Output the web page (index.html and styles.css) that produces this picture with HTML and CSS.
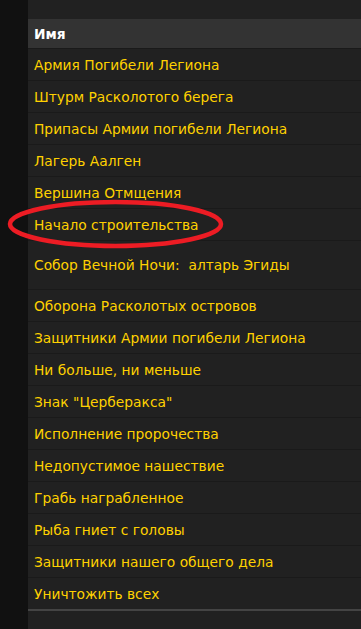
FILE: index.html
```html
<!DOCTYPE html>
<html lang="ru">
<head>
<meta charset="utf-8">
<link rel="stylesheet" href="styles.css">
</head>
<body>
<div class="page">
  <div class="side"></div>
  <div class="main">
    <div class="table">
      <div class="head">Имя</div>
      <div class="row">Армия Погибели Легиона</div>
      <div class="row">Штурм Расколотого берега</div>
      <div class="row">Припасы Армии погибели Легиона</div>
      <div class="row">Лагерь Аалген</div>
      <div class="row">Вершина Отмщения</div>
      <div class="row">Начало строительства</div>
      <div class="row tall">Собор Вечной Ночи:&nbsp; алтарь Эгиды</div>
      <div class="row">Оборона Расколотых островов</div>
      <div class="row">Защитники Армии погибели Легиона</div>
      <div class="row">Ни больше, ни меньше</div>
      <div class="row">Знак "Церберакса"</div>
      <div class="row">Исполнение пророчества</div>
      <div class="row">Недопустимое нашествие</div>
      <div class="row">Грабь награбленное</div>
      <div class="row">Рыба гниет с головы</div>
      <div class="row">Защитники нашего общего дела</div>
      <div class="row last">Уничтожить всех</div>
    </div>
  </div>
  <svg class="mark" width="361" height="629" viewBox="0 0 361 629">
    <ellipse cx="115.5" cy="224" rx="105.5" ry="22" fill="none" stroke="#ed1c24" stroke-width="4.5"/>
  </svg>
</div>
</body>
</html>
```
FILE: styles.css
```css
html, body {
  margin: 0;
  padding: 0;
  background: #111111;
}
.page {
  position: relative;
  display: flex;
  width: 361px;
  height: 629px;
  overflow: hidden;
  font-family: "DejaVu Sans", Verdana, sans-serif;
  font-size: 13.8px;
}
.side {
  width: 28px;
  flex: none;
  background: #111111;
}
.main {
  flex: 1;
  background: #212121;
  padding-top: 19px;
}
.table {
  display: flex;
  flex-direction: column;
}
.head {
  height: 29px;
  display: flex;
  align-items: center;
  padding-left: 6px;
  background: #333333;
  color: #ffffff;
  font-weight: bold;
  border-bottom: 1px solid #1a1a1a;
}
.row {
  height: 31px;
  display: flex;
  align-items: center;
  padding-left: 6px;
  color: #ffd100;
  border-bottom: 1px solid #1a1a1a;
  white-space: nowrap;
}
.row.tall {
  height: 48px;
}
.row.last {
  border-bottom: 2px solid #444444;
}
.mark {
  position: absolute;
  left: 0;
  top: 0;
  pointer-events: none;
}
```
